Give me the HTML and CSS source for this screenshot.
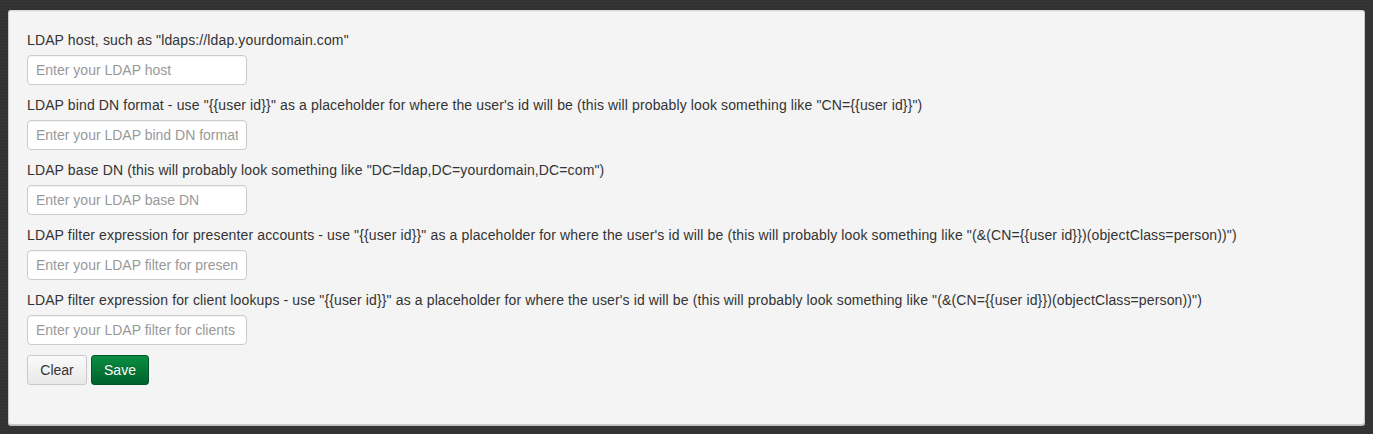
FILE: index.html
```html
<!DOCTYPE html>
<html>
<head>
<meta charset="utf-8">
<link rel="stylesheet" href="styles.css">
</head>
<body>
<div class="panel">
  <form class="form">
    <div class="group">
      <label class="label">LDAP host, such as "ldaps://ldap.yourdomain.com"</label>
      <input class="input" type="text" placeholder="Enter your LDAP host">
    </div>
    <div class="group">
      <label class="label">LDAP bind DN format - use "{{user id}}" as a placeholder for where the user's id will be (this will probably look something like "CN={{user id}}")</label>
      <input class="input" type="text" placeholder="Enter your LDAP bind DN format">
    </div>
    <div class="group">
      <label class="label">LDAP base DN (this will probably look something like "DC=ldap,DC=yourdomain,DC=com")</label>
      <input class="input" type="text" placeholder="Enter your LDAP base DN">
    </div>
    <div class="group">
      <label class="label">LDAP filter expression for presenter accounts - use "{{user id}}" as a placeholder for where the user's id will be (this will probably look something like "(&amp;(CN={{user id}})(objectClass=person))")</label>
      <input class="input" type="text" placeholder="Enter your LDAP filter for presenter accounts">
    </div>
    <div class="group">
      <label class="label">LDAP filter expression for client lookups - use "{{user id}}" as a placeholder for where the user's id will be (this will probably look something like "(&amp;(CN={{user id}})(objectClass=person))")</label>
      <input class="input" type="text" placeholder="Enter your LDAP filter for clients">
    </div>
    <div class="actions">
      <button type="button" class="btn btn-default">Clear</button>
      <button type="button" class="btn btn-save">Save</button>
    </div>
  </form>
</div>
</body>
</html>
```
FILE: styles.css
```css
html, body {
  margin: 0;
  padding: 0;
}
body {
  background-color: #343434;
  background-image:
    repeating-linear-gradient(0deg, rgba(255,255,255,0.02) 0 1px, transparent 1px 3px),
    repeating-linear-gradient(90deg, rgba(0,0,0,0.06) 0 1px, transparent 1px 2px);
  font-family: "Liberation Sans", Arial, Helvetica, sans-serif;
  font-size: 14px;
  line-height: 20px;
  color: #333;
  height: 434px;
  padding: 10px 8px 0 8px;
  box-sizing: border-box;
}
.panel {
  background: #f4f4f4;
  border: 1px solid #c8c8c8;
  border-top-color: #d8d8d8;
  border-radius: 3px;
  box-shadow: 0 1px 0 #bdbdbd, inset 0 1px 0 #e9e9e9;
  padding: 19px 18px 39px 18px;
}
.form {
  margin: 0;
}
.group {
  margin-bottom: 10px;
}
.label {
  display: block;
  margin-bottom: 5px;
  font-weight: normal;
  letter-spacing: 0.13px;
}
.input {
  display: block;
  box-sizing: border-box;
  width: 220px;
  height: 30px;
  padding: 4px 8px;
  font-family: "Liberation Sans", Arial, Helvetica, sans-serif;
  font-size: 14px;
  color: #555;
  background: #fff;
  border: 1px solid #ccc;
  border-radius: 4px;
  box-shadow: inset 0 1px 1px rgba(0,0,0,0.05);
  margin: 0;
}
.input::placeholder {
  color: #999;
}
.actions {
  display: flex;
  gap: 4px;
  padding-top: 0;
}
.btn {
  box-sizing: border-box;
  height: 30px;
  padding: 4px 12px;
  font-family: "Liberation Sans", Arial, Helvetica, sans-serif;
  font-size: 14px;
  line-height: 20px;
  border-radius: 3px;
  cursor: pointer;
}
.btn-default {
  width: 60px;
  color: #333;
  background: linear-gradient(to bottom, #fafafa 0%, #e8e8e8 100%);
  border: 1px solid #c9c9c9;
  box-shadow: inset 0 1px 0 rgba(255,255,255,0.2);
}
.btn-save {
  width: 58px;
  color: #fff;
  background: linear-gradient(to bottom, #0a8e42 0%, #00622d 100%);
  border: 1px solid #00552a;
  text-shadow: 0 -1px 0 rgba(0,0,0,0.2);
}
```
